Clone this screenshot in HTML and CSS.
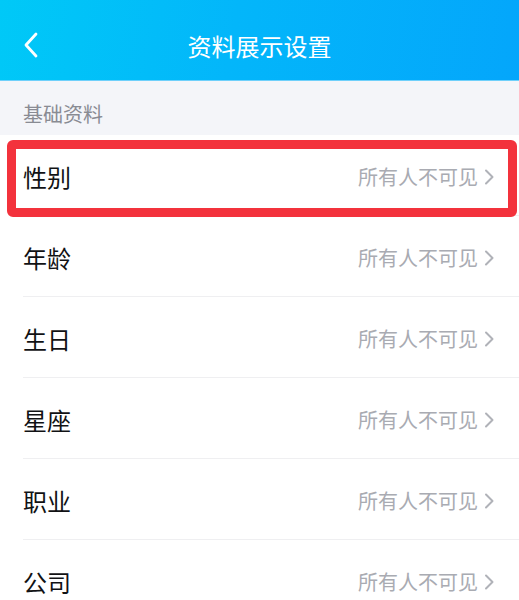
FILE: index.html
```html
<!DOCTYPE html>
<html lang="zh-CN">
<head>
<meta charset="utf-8">
<title>资料展示设置</title>
<link rel="stylesheet" href="styles.css">
</head>
<body>
<div class="app">
  <header class="topbar">
    <svg class="back" width="16" height="26" viewBox="0 0 16 26"><polyline points="13,2 3,13 13,24" fill="none" stroke="#fff" stroke-width="2.8" stroke-linecap="round" stroke-linejoin="round"/></svg>
    <h1 class="title">资料展示设置</h1>
  </header>
  <div class="section-label">基础资料</div>
  <div class="list">
    <div class="highlight"></div>
    <div class="row"><span class="name">性别</span><span class="value">所有人不可见<svg class="chev" width="10" height="16" viewBox="0 0 10 16"><polyline points="2,1.5 8.5,8 2,14.5" fill="none" stroke="#b0b2b8" stroke-width="2" stroke-linecap="round" stroke-linejoin="round"/></svg></span></div>
    <div class="row"><span class="name">年龄</span><span class="value">所有人不可见<svg class="chev" width="10" height="16" viewBox="0 0 10 16"><polyline points="2,1.5 8.5,8 2,14.5" fill="none" stroke="#b0b2b8" stroke-width="2" stroke-linecap="round" stroke-linejoin="round"/></svg></span></div>
    <div class="row"><span class="name">生日</span><span class="value">所有人不可见<svg class="chev" width="10" height="16" viewBox="0 0 10 16"><polyline points="2,1.5 8.5,8 2,14.5" fill="none" stroke="#b0b2b8" stroke-width="2" stroke-linecap="round" stroke-linejoin="round"/></svg></span></div>
    <div class="row"><span class="name">星座</span><span class="value">所有人不可见<svg class="chev" width="10" height="16" viewBox="0 0 10 16"><polyline points="2,1.5 8.5,8 2,14.5" fill="none" stroke="#b0b2b8" stroke-width="2" stroke-linecap="round" stroke-linejoin="round"/></svg></span></div>
    <div class="row"><span class="name">职业</span><span class="value">所有人不可见<svg class="chev" width="10" height="16" viewBox="0 0 10 16"><polyline points="2,1.5 8.5,8 2,14.5" fill="none" stroke="#b0b2b8" stroke-width="2" stroke-linecap="round" stroke-linejoin="round"/></svg></span></div>
    <div class="row"><span class="name">公司</span><span class="value">所有人不可见<svg class="chev" width="10" height="16" viewBox="0 0 10 16"><polyline points="2,1.5 8.5,8 2,14.5" fill="none" stroke="#b0b2b8" stroke-width="2" stroke-linecap="round" stroke-linejoin="round"/></svg></span></div>
  </div>
</div>
</body>
</html>
```
FILE: styles.css
```css
html, body {
  margin: 0;
  padding: 0;
  background: #ffffff;
}
body {
  font-family: "Noto Sans CJK SC", "Noto Sans", sans-serif;
  width: 519px;
  height: 600px;
  overflow: hidden;
}
.app {
  width: 519px;
}
.topbar {
  position: relative;
  height: 80px;
  background: linear-gradient(100deg, #00c9f7 0%, #03b6fa 45%, #04a6fb 100%);
  border-bottom: 1px solid #6fd0fb;
  display: flex;
  align-items: center;
  justify-content: center;
}
.back {
  position: absolute;
  left: 23px;
  top: 32px;
}
.title {
  margin: 0;
  font-size: 24px;
  font-weight: 400;
  color: #ffffff;
  line-height: 1;
  padding-top: 12px;
}
.section-label {
  height: 54px;
  background: #f4f5f9;
  color: #898b93;
  font-size: 20px;
  line-height: 1;
  padding-left: 23px;
  display: flex;
  align-items: center;
  box-sizing: border-box;
  padding-top: 12px;
}
.list {
  position: relative;
  background: #ffffff;
}
.row {
  height: 80px;
  margin-left: 23px;
  padding-right: 25px;
  border-bottom: 1px solid #efeff1;
  display: flex;
  align-items: center;
  justify-content: space-between;
}
.name {
  font-size: 24px;
  color: #111214;
  line-height: 1;
  padding-top: 4px;
}
.value {
  display: flex;
  align-items: center;
  font-size: 20px;
  color: #a9abb2;
  line-height: 1;
  padding-top: 3px;
}
.chev {
  margin-left: 6px;
}
.highlight {
  position: absolute;
  left: 7px;
  top: 5px;
  width: 510px;
  height: 77px;
  box-sizing: border-box;
  border: 9px solid #f3323c;
  border-radius: 6px;
  pointer-events: none;
}
```
